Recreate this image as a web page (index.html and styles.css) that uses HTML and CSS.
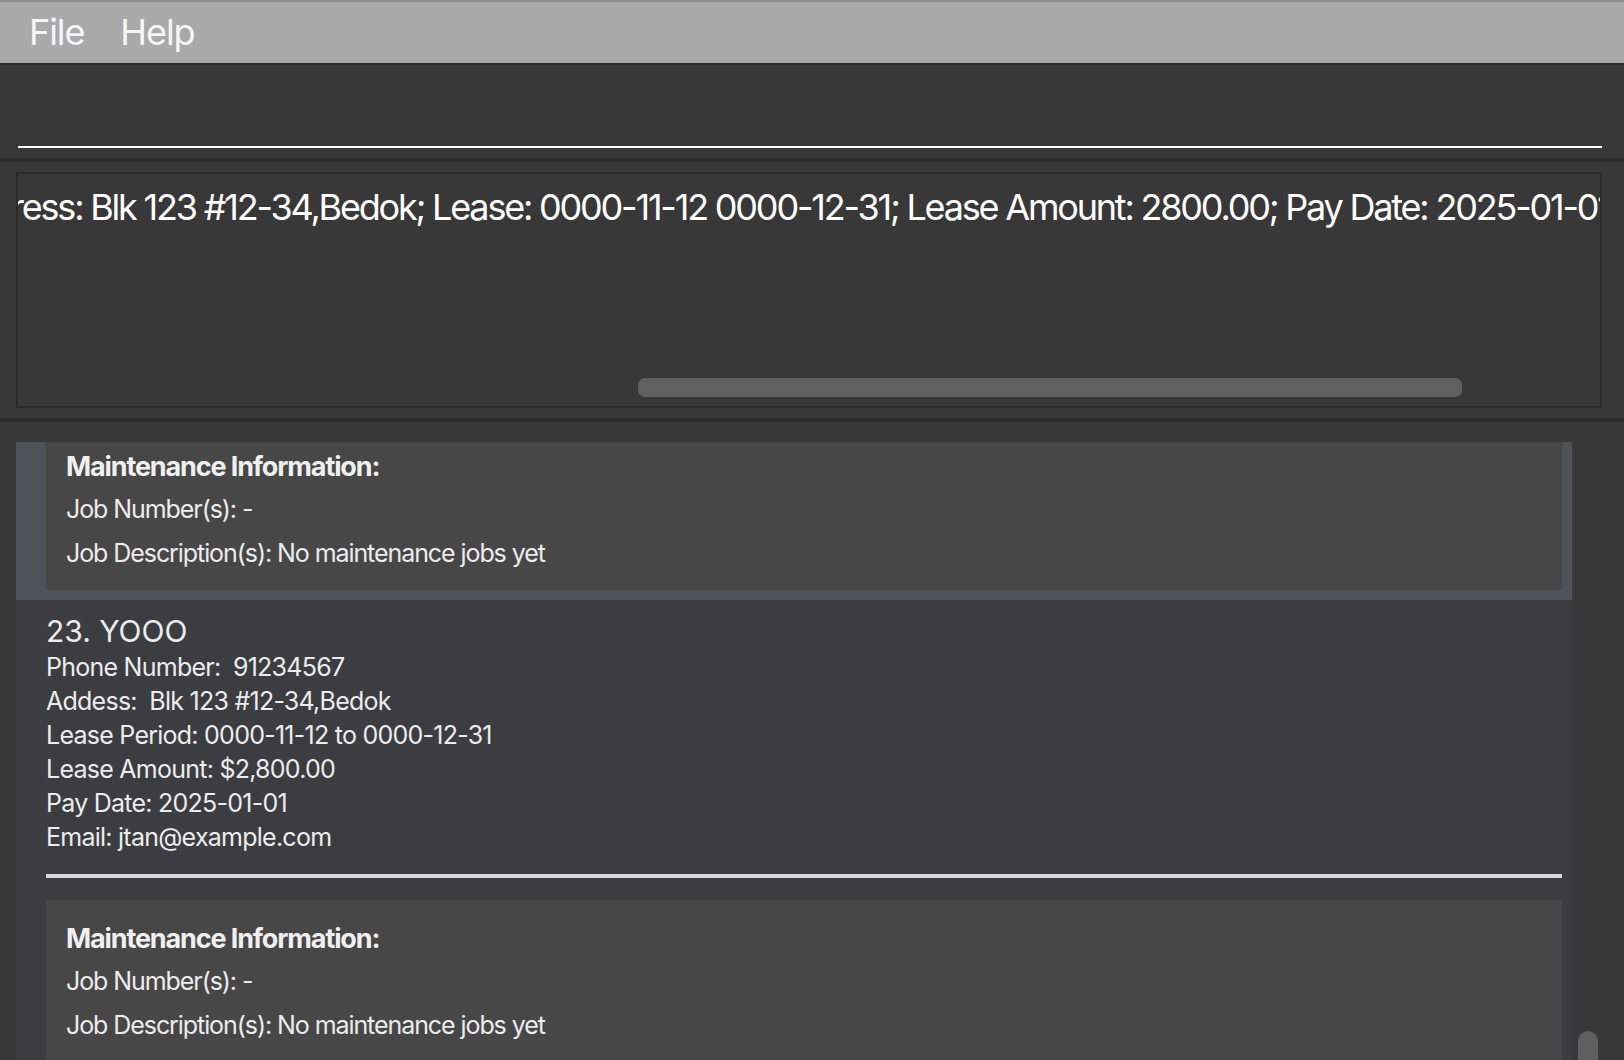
FILE: index.html
```html
<!DOCTYPE html>
<html>
<head>
<meta charset="utf-8">
<title>Tenant Manager</title>
<link rel="stylesheet" href="styles.css">
</head>
<body>
<div class="app">
  <div class="menubar">
    <span class="menu-item">File</span>
    <span class="menu-item">Help</span>
  </div>
  <div class="command">
    <div class="command-input"></div>
  </div>
  <div class="divider"></div>
  <div class="result-pane">
    <div class="result-box">
      <div class="result-text"><span class="result-line">ress: Blk 123 #12-34,Bedok; Lease: 0000-11-12 0000-12-31; Lease Amount: 2800.00; Pay Date: 2025-01-01</span></div>
      <div class="hscroll"><div class="hthumb" style="margin-left:620px;width:824px"></div></div>
    </div>
  </div>
  <div class="divider"></div>
  <div class="list-pane">
    <div class="list-viewport">
      <div class="card card-selected">
        <div class="maint maint-cut">
          <div class="maint-title">Maintenance Information:</div>
          <div class="maint-line">Job Number(s): -</div>
          <div class="maint-line">Job Description(s): No maintenance jobs yet</div>
        </div>
      </div>
      <div class="card">
        <div class="name">23. YOOO</div>
        <div class="detail">Phone Number:  91234567</div>
        <div class="detail">Addess:  Blk 123 #12-34,Bedok</div>
        <div class="detail">Lease Period: 0000-11-12 to 0000-12-31</div>
        <div class="detail">Lease Amount: $2,800.00</div>
        <div class="detail">Pay Date: 2025-01-01</div>
        <div class="detail">Email: jtan@example.com</div>
        <div class="sep"></div>
        <div class="maint">
          <div class="maint-title">Maintenance Information:</div>
          <div class="maint-line">Job Number(s): -</div>
          <div class="maint-line">Job Description(s): No maintenance jobs yet</div>
        </div>
      </div>
    </div>
    <div class="vscroll"><div class="vthumb" style="margin-top:589px"></div></div>
  </div>
</div>
</body>
</html>
```
FILE: styles.css
```css
* { box-sizing: border-box; }
html, body {
  margin: 0;
  padding: 0;
  background: #383838;
  overflow: hidden;
}
.app {
  width: 1624px;
  height: 1060px;
  display: flex;
  flex-direction: column;
  font-family: Inter, "Noto Sans", sans-serif;
  color: #f0f0f0;
  overflow: hidden;
}
.menubar {
  height: 65px;
  flex: none;
  background: #a9a9a9;
  border-top: 2px solid #8b8b8b;
  border-bottom: 2px solid #2a2a2a;
  display: flex;
  align-items: center;
  padding-left: 29px;
}
.menu-item {
  font-size: 36px;
  line-height: 61px;
  color: #f6f6f6;
  letter-spacing: -0.03em;
  margin-right: 36px;
}
.command {
  height: 93px;
  flex: none;
  padding: 0 22px 0 18px;
}
.command-input {
  height: 83px;
  border-bottom: 2px solid #ffffff;
}
.divider {
  height: 4px;
  flex: none;
  background: #2a2a2a;
}
.result-pane {
  height: 256px;
  flex: none;
  padding: 10px 22px 10px 16px;
}
.result-box {
  height: 236px;
  border: 2px solid #2b2b2b;
  display: flex;
  flex-direction: column;
  overflow: hidden;
}
.result-text {
  flex: 1;
  overflow: hidden;
  white-space: nowrap;
  padding-top: 10px;
}
.result-line {
  display: inline-block;
  margin-left: -7px;
  font-size: 36px;
  line-height: 46px;
  letter-spacing: -2.2px;
  color: #ffffff;
}
.hscroll {
  height: 19px;
  margin-bottom: 9px;
  flex: none;
}
.hthumb {
  height: 19px;
  background: #606060;
  border-radius: 7px;
}
.list-pane {
  flex: 1;
  display: flex;
  padding: 20px 0 0 16px;
  overflow: hidden;
}
.list-viewport {
  width: 1556px;
  flex: none;
  overflow: hidden;
}
.vscroll {
  width: 20px;
  margin-left: 6px;
  flex: none;
}
.vthumb {
  width: 20px;
  height: 60px;
  background: #5f5f5f;
  border-radius: 10px;
}
.card {
  background: #3c3d40;
  padding: 13px 10px 0 30px;
}
.card-selected {
  background: #4c5257;
  padding: 0 10px 10px 30px;
}
.name {
  font-size: 30px;
  line-height: 37px;
  letter-spacing: 0;
  color: #ececec;
}
.detail {
  font-size: 25px;
  line-height: 34px;
  letter-spacing: -0.03em;
  white-space: pre;
  color: #ececec;
}
.sep {
  margin-top: 20px;
  height: 4px;
  background: #d6d6d6;
}
.maint {
  margin-top: 22px;
  background: #474747;
  padding: 17px 20px 14px 20px;
}
.maint-cut {
  margin-top: 0;
  padding-top: 3px;
  padding-bottom: 15px;
}
.maint-title {
  font-size: 27px;
  font-weight: 700;
  line-height: 43px;
  letter-spacing: -0.042em;
  color: #f0f0f0;
}
.maint-line {
  font-size: 25px;
  line-height: 43.5px;
  letter-spacing: -0.043em;
  color: #ececec;
}
```
